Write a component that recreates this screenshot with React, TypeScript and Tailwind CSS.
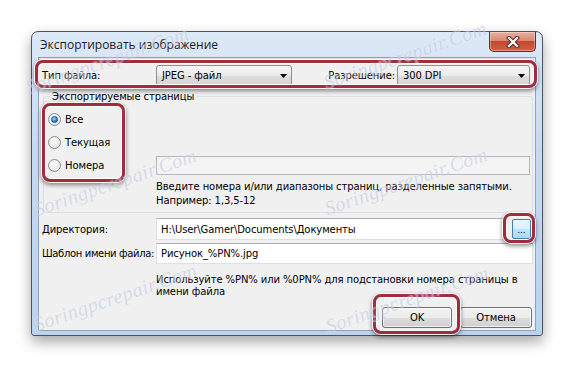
import React from 'react';

const UI_FONT = "font-['DejaVu_Sans',sans-serif]";

// watermark centers (page coords)
const WATERMARKS = [
  { cx: 107, cy: 60 },
  { cx: 405, cy: 55 },
  { cx: 115, cy: 182 },
  { cx: 406, cy: 181 },
  { cx: 115, cy: 297 },
  { cx: 407, cy: 299 },
];

function Radio({ checked, label }: { checked?: boolean; label: string }) {
  return (
    <div className="flex items-center h-[23px]">
      <span className="w-[13px] h-[13px] rounded-full border border-[#8a8a8a] bg-[radial-gradient(circle_at_40%_35%,#ffffff,#dcdcdc)] flex items-center justify-center">
        {checked && (
          <span className="w-[7px] h-[7px] rounded-full bg-[radial-gradient(circle_at_40%_35%,#9fe0ff,#1a6fb8_70%,#0b3f73)] border border-[#1c4f7e]" />
        )}
      </span>
      <span className="ml-[4px]">{label}</span>
    </div>
  );
}

function Combo({ value, width }: { value: string; width: string }) {
  return (
    <div className={`${width} h-[21px] flex items-center pl-[5px] pr-[4px] rounded-[3px] border border-[#8e8f8f] bg-[linear-gradient(#f6f6f6,#ebebeb_50%,#dddddd_51%,#d6d6d6)]`}>
      <span className="flex-1">{value}</span>
      <svg width="7" height="4" viewBox="0 0 7 4"><polygon points="0,0 7,0 3.5,4" fill="#000" /></svg>
    </div>
  );
}

function Mark({ className }: { className: string }) {
  return (
    <div
      className={`absolute pointer-events-none rounded-[8px] border-[3px] border-[#a02c3e] shadow-[inset_0_0_0_1px_rgba(255,255,255,0.9),0_0_0_1px_rgba(255,255,255,0.9),0_2px_4px_1px_rgba(0,0,0,0.45)] ${className}`}
    />
  );
}

export default function App() {
  return (
    <div className={`relative w-[575px] h-[370px] bg-white overflow-hidden pl-[31px] pt-[31px] ${UI_FONT} text-[10px] tracking-[-0.1px] text-black`}>
      <div className="relative w-[512px] h-[305px] rounded-t-[7px] rounded-b-[3px] border border-[#485468] bg-[linear-gradient(#dce9f7,#c6d9f0_40%,#bcd3ee)] shadow-[0_6px_14px_rgba(0,0,0,0.35)] flex flex-col">
        {/* title bar */}
        <div className="h-[25px] flex items-center pl-[8px] font-['Open_Sans',sans-serif] text-[12px] tracking-normal text-[#1b1b1b]">
          Экспортировать изображение
        </div>
        <div className="absolute top-0 right-[6px] w-[47px] h-[20px] rounded-b-[5px] border border-t-0 border-[#6e2a22] bg-[linear-gradient(#eab0a2,#d98673_45%,#c0482f_50%,#d6613f)] flex items-center justify-center shadow-[inset_0_0_0_1px_rgba(255,255,255,0.35)]">
          <svg width="14" height="12" viewBox="0 0 14 12">
            <path d="M3 2 L11 10 M11 2 L3 10" stroke="#5a2a24" strokeWidth="4.2" strokeLinecap="square" />
            <path d="M3 2 L11 10 M11 2 L3 10" stroke="#fff" strokeWidth="2.2" strokeLinecap="square" />
          </svg>
        </div>

        {/* client area */}
        <div className="relative mx-[6px] h-[274px] border border-[#8aa3c3] bg-[#f0f0f0] flex flex-col">
          {/* file type / resolution */}
          <div className="mt-[7px] h-[21px] flex items-center pl-[3px] pr-[5px]">
            <span className="w-[114px]">Тип файла:</span>
            <Combo value="JPEG - файл" width="w-[136px]" />
            <span className="flex-1 text-right pr-[2px]">Разрешение:</span>
            <Combo value="300 DPI" width="w-[133px]" />
          </div>

          {/* pages group */}
          <fieldset className="mt-[4px] ml-[4px] mr-[2px] border border-[#d5dfe5] rounded-[3px] pl-[4px] pr-[2px] pb-[4px]">
            <legend className="ml-[2px] px-[2px] leading-[13px]">Экспортируемые страницы</legend>
            <div className="pt-[5px]">
              <Radio checked label="Все" />
              <Radio label="Текущая" />
              <div className="flex items-center">
                <div className="w-[108px]">
                  <Radio label="Номера" />
                </div>
                <div className="flex-1 h-[19px] border border-[#b4b8bd] bg-[#f4f4f4]" />
              </div>
              <div className="pl-[108px] mt-[3px] leading-[14px]">
                <div>Введите номера и/или диапазоны страниц, разделенные запятыми.</div>
                <div>Например: 1,3,5-12</div>
              </div>
            </div>
          </fieldset>

          {/* directory */}
          <div className="mt-[5px] flex items-center pl-[3px]">
            <span className="w-[114px] whitespace-nowrap">Директория:</span>
            <div className="w-[350px] h-[22px] flex items-center pl-[4px] bg-white border border-[#dde1e7] border-t-[#abadb3]">
              H:\User\Gamer\Documents\Документы
            </div>
            <div className="ml-[6px] w-[19px] h-[20px] rounded-[2px] border border-[#3c7fb1] bg-[linear-gradient(#eaf6fd,#d9f0fc_50%,#bee6fd_51%,#a7d9f5)] flex items-end justify-center pb-[4px] leading-[8px] text-[9px]">
              ...
            </div>
          </div>

          {/* file name template */}
          <div className="mt-[3px] flex items-center pl-[3px] pr-[2px]">
            <span className="w-[114px] whitespace-nowrap tracking-[-0.35px]">Шаблон имени файла:</span>
            <div className="flex-1 h-[21px] flex items-center pl-[4px] bg-white border border-[#dde1e7] border-t-[#abadb3]">
              Рисунок_%PN%.jpg
            </div>
          </div>
          <div className="pl-[117px] mt-[10px] leading-[12px]">
            <div>Используйте %PN% или %0PN% для подстановки номера страницы в</div>
            <div>имени файла</div>
          </div>

          {/* buttons */}
          <div className="mt-auto mb-[2px] mr-[3px] flex justify-end gap-[8px]">
            <button className="w-[70px] h-[21px] rounded-[3px] border border-[#707070] bg-[linear-gradient(#f2f2f2,#ebebeb_50%,#dddddd_51%,#cfcfcf)] shadow-[inset_0_0_0_1px_rgba(255,255,255,0.7)]">
              OK
            </button>
            <button className="w-[72px] h-[21px] rounded-[3px] border border-[#707070] bg-[linear-gradient(#f2f2f2,#ebebeb_50%,#dddddd_51%,#cfcfcf)] shadow-[inset_0_0_0_1px_rgba(255,255,255,0.7)]">
              Отмена
            </button>
          </div>

          {/* red annotation frames */}
          <Mark className="left-[-4px] top-[2px] w-[502px] h-[28px]" />
          <Mark className="left-[3px] top-[45px] w-[83px] h-[79px]" />
          <Mark className="left-[464px] top-[155px] w-[32px] h-[30px]" />
          <Mark className="left-[334px] top-[236px] w-[87px] h-[40px]" />
        </div>
      </div>

      {/* watermark */}
      {WATERMARKS.map((w, i) => (
        <div
          key={i}
          className="absolute w-[200px] h-[24px] text-center font-['Liberation_Serif',serif] italic text-[20px] leading-[24px] tracking-[0.5px] text-[#c3cbe2] opacity-60 -rotate-[19deg] pointer-events-none [text-shadow:0_0_2px_#ffffff]"
          style={{ left: w.cx - 100, top: w.cy - 12 }}
        >
          Soringpcrepair.Com
        </div>
      ))}
    </div>
  );
}
